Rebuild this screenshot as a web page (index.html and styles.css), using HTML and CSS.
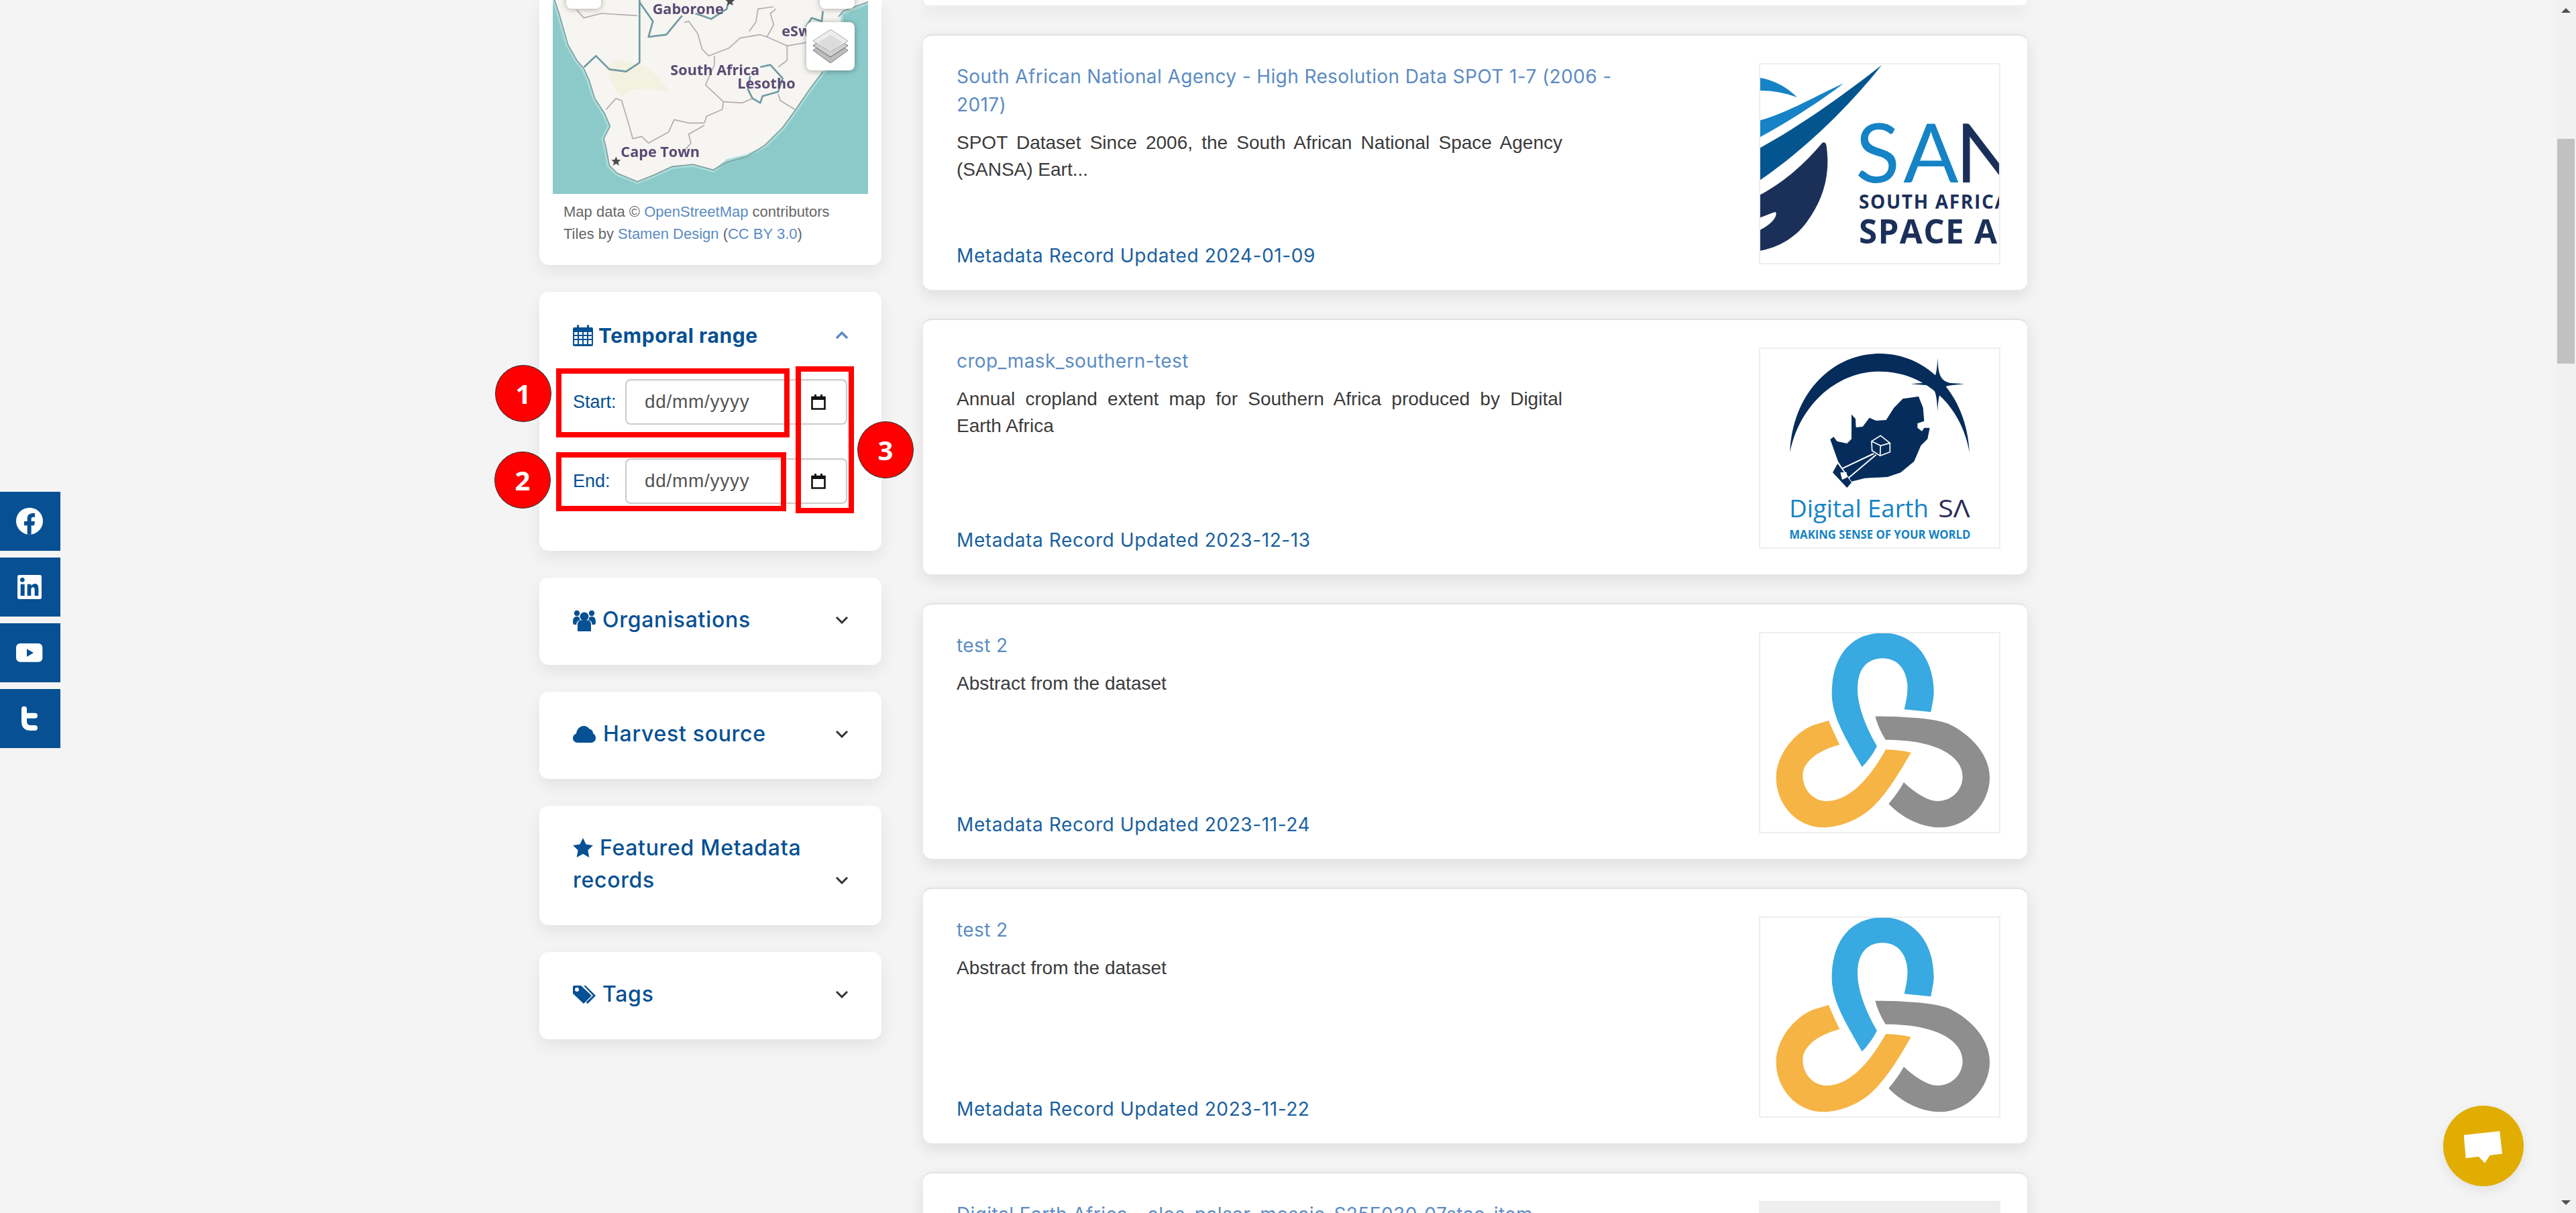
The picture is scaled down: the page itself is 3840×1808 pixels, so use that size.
FILE: index.html
```html
<!DOCTYPE html>
<html lang="en">
<head>
<meta charset="utf-8">
<title>Metadata search</title>
<link rel="stylesheet" href="styles.css">
</head>
<body>
<div class="app">
  <main class="content">
    <aside class="sidebar">
      <section class="panel map-panel">
        <div class="map">
          <svg class="map-art" viewBox="12 0 1410 867" preserveAspectRatio="none">
            <rect x="12" y="0" width="1410" height="867" fill="#8ccaca"/>
            <path class="coast-halo" d="M20,0 L40,60 L60,130 L80,200 L120,270 L150,305 L175,360 L200,440 L245,510 L268,565 L240,620 L250,660 L265,740 L300,775 L390,812 L470,780 L545,745 L640,735 L730,760 L790,712 L880,690 L960,650 L1040,570 L1095,495 L1160,400 L1220,320 L1300,240 L1300,60 L1422,8 L1422,0 Z"/>
            <path class="land" d="M20,0 L40,60 L60,130 L80,200 L120,270 L150,305 L175,360 L200,440 L245,510 L268,565 L240,620 L250,660 L265,740 L300,775 L390,812 L470,780 L545,745 L640,735 L730,760 L790,712 L880,690 L960,650 L1040,570 L1095,495 L1160,400 L1220,320 L1300,240 L1300,60 L1422,8 L1422,0 Z"/>
            <path class="desert" d="M262,290 L300,268 L420,295 L480,340 L535,410 L440,395 L370,400 L320,430 L290,400 L265,340 Z"/>
            <path class="coastline" d="M20,0 L40,60 L60,130 L80,200 L120,270 L150,305 L175,360 L200,440 L245,510 L268,565 L240,620 L250,660 L265,740 L300,775 L390,812 L470,780 L545,745 L640,735 L730,760 L790,725 L880,700 L960,650 L1040,570 L1095,495 L1160,400 L1220,320"/>
            <path class="coastline" d="M1290,75 L1310,50 L1422,8"/>
            <path class="state" d="M600,100 L620,95 L660,150 L680,220 L710,250 L760,230 L800,215 L850,170 L940,155 L970,165 L1060,205 L1060,270 L1020,300"/>
            <path class="state" d="M735,250 L735,290 L695,380 L775,455 L770,490 L700,520 L690,550 L620,550 L555,535 L530,590 L440,640 L410,610 L370,620 L350,550 L320,450 L295,440 L250,490"/>
            <path class="state" d="M775,455 L860,460 L905,440"/>
            <path class="state" d="M1020,420 L1030,450 L1095,490"/>
            <path class="state" d="M690,560 L620,600 L630,640 L595,680"/>
            <path class="state" d="M970,165 L1000,110 L985,60 L1010,40"/>
            <path class="state" d="M890,140 L920,100 L930,40 L1000,30"/>
            <path class="state" d="M1060,205 L1145,190"/>
            <path class="state" d="M120,45 L150,80 L230,60 L390,70"/>
            <path class="border" d="M400,0 L400,280 L340,320 L265,310 L205,250 L152,300"/>
            <path class="border" d="M400,10 L460,95 L440,165 L520,155 L590,70"/>
            <path class="border" d="M650,60 L720,85 L790,40 L800,0"/>
            <path class="border" d="M940,300 L985,290 L1040,350 L1020,410 L950,430 L940,460 L905,440 L885,400 L895,340"/>
            <path class="border" d="M1145,120 L1170,80 L1215,95 L1220,50"/>
            <path class="star" d="M295,700 L301,714 L316,715 L304,725 L309,740 L295,732 L281,740 L286,725 L274,715 L289,714 Z"/>
            <path class="star" d="M805,-15 L811,-1 L826,0 L814,10 L819,25 L805,17 L791,25 L796,10 L784,0 L799,-1 Z"/>
            <text class="place" x="458" y="62">Gaborone</text>
            <text class="place" x="1036" y="162">eSwatini</text>
            <text class="place" x="538" y="336">South Africa</text>
            <text class="place" x="838" y="396">Lesotho</text>
            <text class="place" x="316" y="702">Cape Town</text>
          </svg>
          <span class="map-btn map-btn-left"></span>
          <span class="map-btn map-btn-right"></span>
          <span class="map-layers">
            <svg class="layers-icon" viewBox="0 0 52 50">
              <path d="M26,14 L52,31 L26,50 L0,31 Z" fill="#bdbdbd" stroke="#777" stroke-width="1"/>
              <path d="M26,7 L52,24 L26,41 L0,24 Z" fill="#d0d0d0" stroke="#666" stroke-width="1"/>
              <path d="M26,0 L52,17 L26,33 L0,17 Z" fill="#ededed" stroke="#aaa" stroke-width="1"/>
              <path d="M26,8 L44,19 L26,33 L8,19 Z" fill="#dcdcdc"/>
            </svg>
          </span>
        </div>
        <p class="attribution">Map data © <a class="link" href="#">OpenStreetMap</a> contributors<br>Tiles by <a class="link" href="#">Stamen Design</a> (<a class="link" href="#">CC BY 3.0</a>)</p>
      </section>

      <section class="panel filter filter-open">
        <header class="filter-head">
          <h2 class="filter-title filter-title-bold">
            <svg class="ico ico-cal" viewBox="0 0 30 32"><path fill-rule="evenodd" d="M2,4 H6 V1.5 A1.5,1.5 0 0 1 9,1.5 V4 H21 V1.5 A1.5,1.5 0 0 1 24,1.5 V4 H28 A2,2 0 0 1 30,6 V30 A2,2 0 0 1 28,32 H2 A2,2 0 0 1 0,30 V6 A2,2 0 0 1 2,4 Z M2,11 V15 H7 V11 Z M9,11 V15 H14 V11 Z M16,11 V15 H21 V11 Z M23,11 V15 H28 V11 Z M2,17 V21 H7 V17 Z M9,17 V21 H14 V17 Z M16,17 V21 H21 V17 Z M23,17 V21 H28 V17 Z M2,23 V29 H7 V23 Z M9,23 V29 H14 V23 Z M16,23 V29 H21 V23 Z M23,23 V29 H28 V23 Z"/></svg>Temporal range
          </h2>
          <svg class="chev chev-up" viewBox="0 0 20 12"><path d="M2,10 L10,2 L18,10"/></svg>
        </header>
        <div class="date-rows">
          <div class="date-row">
            <span class="date-label">Start:</span>
            <div class="date-input"><span class="date-value">dd/mm/yyyy</span>
              <svg class="date-ico" viewBox="0 0 22 24"><path d="M1.5,5 H20.5 V22.5 H1.5 Z" fill="none" stroke="#111" stroke-width="2.6"/><path d="M1,4 H21 V9 H1 Z M5,1 H8 V5 H5 Z M14,1 H17 V5 H14 Z" fill="#111"/></svg>
            </div>
          </div>
          <div class="date-row">
            <span class="date-label">End:</span>
            <div class="date-input"><span class="date-value">dd/mm/yyyy</span>
              <svg class="date-ico" viewBox="0 0 22 24"><path d="M1.5,5 H20.5 V22.5 H1.5 Z" fill="none" stroke="#111" stroke-width="2.6"/><path d="M1,4 H21 V9 H1 Z M5,1 H8 V5 H5 Z M14,1 H17 V5 H14 Z" fill="#111"/></svg>
            </div>
          </div>
        </div>
      </section>

      <section class="panel filter">
        <header class="filter-head">
          <h2 class="filter-title">
            <svg class="ico ico-users" viewBox="0 0 34 32"><circle cx="17" cy="10" r="6.5"/><circle cx="6" cy="5" r="4.2"/><circle cx="28" cy="5" r="4.2"/><path d="M7,32 V22 C7,17 10,15.5 13,15.5 H21 C24,15.5 27,17 27,22 V32 Z"/><path d="M0,18 C0,11 3,10 6,10 C7.5,10 8.5,10.5 9.5,11 C10,14 11,16 12,15 C7,16 5,19 5.5,22 H2 C1,22 0,21 0,18 Z"/><path d="M34,18 C34,11 31,10 28,10 C26.5,10 25.5,10.5 24.5,11 C24,14 23,16 22,15 C27,16 29,19 28.5,22 H32 C33,22 34,21 34,18 Z"/></svg>Organisations
          </h2>
          <svg class="chev" viewBox="0 0 20 12"><path d="M2,2 L10,10 L18,2"/></svg>
        </header>
      </section>

      <section class="panel filter">
        <header class="filter-head">
          <h2 class="filter-title">
            <svg class="ico ico-cloud" viewBox="0 0 34 25"><path d="M7,25 C3,25 0,22 0,18.5 C0,15 2,12.5 5,11.5 C5.5,5 10.5,0 16,0 C20,0 23,2 25,5 C28,5 30,7.5 30,11 C32.5,12.5 34,15 34,18 C34,22 31,25 27,25 Z"/></svg>Harvest source
          </h2>
          <svg class="chev" viewBox="0 0 20 12"><path d="M2,2 L10,10 L18,2"/></svg>
        </header>
      </section>

      <section class="panel filter">
        <header class="filter-head">
          <h2 class="filter-title">
            <svg class="ico ico-star" viewBox="0 0 30 29"><path d="M15,0 L19.6,9.6 L30,11 L22.4,18.2 L24.3,29 L15,23.8 L5.7,29 L7.6,18.2 L0,11 L10.4,9.6 Z"/></svg>Featured Metadata records
          </h2>
          <svg class="chev" viewBox="0 0 20 12"><path d="M2,2 L10,10 L18,2"/></svg>
        </header>
      </section>

      <section class="panel filter">
        <header class="filter-head">
          <h2 class="filter-title">
            <svg class="ico ico-tags" viewBox="0 0 34 27"><path fill-rule="evenodd" d="M2,0 H12 L28,15 L16,27 L0,12 V2 A2,2 0 0 1 2,0 Z M6,3 A3,3 0 1 0 6,9 A3,3 0 1 0 6,3 Z"/><path d="M16,0 H19 L34,15 L22,27 L19.5,25 L30,15 Z"/></svg>Tags
          </h2>
          <svg class="chev" viewBox="0 0 20 12"><path d="M2,2 L10,10 L18,2"/></svg>
        </header>
      </section>
    </aside>

    <div class="results">
      <article class="result result-stub"></article>

      <article class="result">
        <div class="result-text">
          <a class="result-title" href="#">South African National Agency - High Resolution Data SPOT 1-7 (2006 - 2017)</a>
          <p class="result-desc">SPOT Dataset Since 2006, the South African National Space Agency (SANSA) Eart...</p>
          <p class="result-date">Metadata Record Updated 2024-01-09</p>
        </div>
        <div class="thumb">
          <svg class="thumb-art" viewBox="132 105 1068 888">
            <path fill="#1583c5" d="M132,165 C190,175 250,205 297,252 C240,232 190,222 132,222 Z"/>
            <path fill="#1583c5" d="M132,355 C260,320 390,240 505,190 C400,270 260,360 132,430 Z"/>
            <path fill="#03558f" d="M132,478 C320,375 520,230 675,108 C540,280 340,480 132,622 Z"/>
            <path fill="#1b3059" fill-rule="evenodd" d="M132,688 C240,630 330,550 410,455 Q425,450 428,470 C445,590 420,700 340,810 C290,880 210,925 132,938 Z M132,790 C160,780 185,768 200,765 Q208,775 195,795 C180,815 160,830 132,845 Z"/>
            <text class="sansa-big" y="632"><tspan class="sansa-blue" x="558">S</tspan><tspan class="sansa-blue" x="772">A</tspan><tspan class="sansa-dark" x="1005">N</tspan></text>
            <text class="sansa-small" x="573" y="750">SOUTH AFRICAN</text>
            <text class="sansa-mid" x="573" y="905">SPACE AGENCY</text>
          </svg>
        </div>
      </article>

      <article class="result">
        <div class="result-text">
          <a class="result-title" href="#">crop_mask_southern-test</a>
          <p class="result-desc">Annual cropland extent map for Southern Africa produced by Digital Earth Africa</p>
          <p class="result-date">Metadata Record Updated 2023-12-13</p>
        </div>
        <div class="thumb">
          <svg class="thumb-art" viewBox="132 57 1068 888">
            <path fill="#052c5a" d="M265,520 C275,260 450,78 665,78 C880,78 1055,260 1068,520 C1030,300 860,158 665,158 C480,158 310,300 265,520 Z"/>
            <path fill="#052c5a" d="M925,95 C928,170 935,200 985,210 L1045,214 L985,220 C940,225 930,250 925,335 C920,250 915,235 880,220 L805,214 L880,208 C915,200 922,170 925,95 Z"/>
            <path fill="#052c5a" d="M445,462 L460,450 L475,470 L520,480 L540,460 L540,350 L558,370 L560,408 L590,405 L620,365 L650,378 L695,375 L730,320 L770,280 L840,270 L860,320 L865,380 L835,390 L835,410 L855,425 L865,410 L890,410 L880,460 L850,490 L820,560 L760,610 L700,630 L600,635 L540,650 L480,560 Z"/>
            <path fill="#052c5a" stroke="#fff" stroke-width="5" d="M670,445 L712,478 L712,518 L668,535 L632,512 L630,470 Z M630,470 L670,490 L712,478 M670,490 L668,535"/>
            <path fill="none" stroke="#fff" stroke-width="6" d="M498,592 L640,525 M520,640 L650,530"/>
            <path fill="#052c5a" d="M478,570 L540,655 L520,678 L456,610 Z"/>
            <path fill="#fff" d="M490,610 L518,608 L520,632 L498,642 Z"/>
            <text class="des-main" x="262" y="810" textLength="623" lengthAdjust="spacingAndGlyphs">Digital Earth</text>
            <text class="des-sa" x="928" y="810" textLength="142" lengthAdjust="spacingAndGlyphs">SΛ</text>
            <text class="des-tag" x="262" y="905" textLength="810" lengthAdjust="spacingAndGlyphs">MAKING SENSE OF YOUR WORLD</text>
          </svg>
        </div>
      </article>

      <article class="result">
        <div class="result-text">
          <a class="result-title" href="#">test 2</a>
          <p class="result-desc">Abstract from the dataset</p>
          <p class="result-date">Metadata Record Updated 2023-11-24</p>
        </div>
        <div class="thumb">
          <svg class="thumb-art" viewBox="132 70 1068 888">
            <path fill="#38a9e1" d="M587,668 C530,565 452,450 452,340 C452,180 530,70 680,68 C810,68 908,170 908,335 C908,360 900,395 895,422 L776,410 C785,370 792,340 790,300 C785,230 745,182 680,182 C600,182 567,240 567,320 C567,400 610,500 654,575 C635,610 615,640 587,668 Z"/>
            <path fill="#f5b444" d="M438,460 C455,500 470,535 487,568 C400,590 322,640 322,705 C322,770 370,820 430,820 C530,820 620,720 693,590 C730,590 770,595 806,603 C750,700 690,800 620,860 C560,910 480,938 415,938 C290,938 203,830 203,715 C203,610 290,510 370,480 Z"/>
            <path fill="#8e8e8e" d="M646,441 C730,441 900,445 975,475 C1070,520 1158,610 1158,715 C1158,830 1060,938 935,938 C860,938 770,900 706,832 C730,805 755,770 774,736 C820,780 880,820 925,820 C990,820 1037,770 1037,710 C1037,620 920,545 692,546 C670,510 655,475 646,441 Z"/>
          </svg>
        </div>
      </article>

      <article class="result">
        <div class="result-text">
          <a class="result-title" href="#">test 2</a>
          <p class="result-desc">Abstract from the dataset</p>
          <p class="result-date">Metadata Record Updated 2023-11-22</p>
        </div>
        <div class="thumb">
          <svg class="thumb-art" viewBox="132 70 1068 888">
            <path fill="#38a9e1" d="M587,668 C530,565 452,450 452,340 C452,180 530,70 680,68 C810,68 908,170 908,335 C908,360 900,395 895,422 L776,410 C785,370 792,340 790,300 C785,230 745,182 680,182 C600,182 567,240 567,320 C567,400 610,500 654,575 C635,610 615,640 587,668 Z"/>
            <path fill="#f5b444" d="M438,460 C455,500 470,535 487,568 C400,590 322,640 322,705 C322,770 370,820 430,820 C530,820 620,720 693,590 C730,590 770,595 806,603 C750,700 690,800 620,860 C560,910 480,938 415,938 C290,938 203,830 203,715 C203,610 290,510 370,480 Z"/>
            <path fill="#8e8e8e" d="M646,441 C730,441 900,445 975,475 C1070,520 1158,610 1158,715 C1158,830 1060,938 935,938 C860,938 770,900 706,832 C730,805 755,770 774,736 C820,780 880,820 925,820 C990,820 1037,770 1037,710 C1037,620 920,545 692,546 C670,510 655,475 646,441 Z"/>
          </svg>
        </div>
      </article>

      <article class="result">
        <div class="result-text">
          <a class="result-title" href="#">Digital Earth Africa - alos_palsar_mosaic_S25E030_07stac-item</a>
        </div>
        <div class="thumb thumb-empty"></div>
      </article>
    </div>
  </main>

  <div class="scrollbar">
    <span class="scroll-arrow scroll-up"></span>
    <span class="scroll-thumb"></span>
    <span class="scroll-arrow scroll-down"></span>
  </div>

  <nav class="social">
    <a class="social-link" href="#"><svg viewBox="0 0 270 264"><circle cx="132" cy="131" r="60" fill="#fff"/><path fill="#065093" d="M122,191 V151 H108 V132 H122 V118 C122,105 132,96 146,96 H156 V113 H148 C142,113 140,116 140,121 V132 H156 L153,151 H140 V191 Z"/></svg></a>
    <a class="social-link" href="#"><svg viewBox="0 0 270 264"><rect x="78" y="78" width="108" height="108" rx="8" fill="#fff"/><circle cx="100" cy="100" r="10" fill="#065093"/><path fill="#065093" d="M92,119 H110 V171 H92 Z M122,119 H139 V127 C144,120 152,117 158,117 C168,117 172,128 172,140 V171 H155 V145 C155,137 152,133 147,133 C142,133 139,137 139,145 V171 H122 Z"/></svg></a>
    <a class="social-link" href="#"><svg viewBox="0 0 270 264"><rect x="72" y="90" width="118" height="83" rx="18" fill="#fff"/><path fill="#065093" d="M120,115 L150,132 L120,150 Z"/></svg></a>
    <a class="social-link" href="#"><svg viewBox="0 0 270 264"><path d="M108,89 V144 Q108,174 138,174 H156 M108,119 H156" fill="none" stroke="#fff" stroke-width="24" stroke-linecap="round"/></svg></a>
  </nav>

  <button class="chat" type="button">
    <svg class="chat-ico" viewBox="0 0 120 120"><path fill="#fff" d="M30.7,43.7 L84.3,38 L88,71.7 L69.7,74 L62,85.7 L53,76 L33.7,78.3 Z"/></svg>
  </button>

  <span class="mark mark-start"></span>
  <span class="mark mark-end"></span>
  <span class="mark mark-icons"></span>
  <span class="badge badge-1">1</span>
  <span class="badge badge-2">2</span>
  <span class="badge badge-3">3</span>
</div>
</body>
</html>
```

FILE: styles.css
```css
* { box-sizing: border-box; }
html, body { margin: 0; padding: 0; }
body {
  width: 3840px;
  height: 1808px;
  overflow: hidden;
  background: #f4f4f4;
  color: #333;
  font-family: "Liberation Sans", Arial, sans-serif;
  font-size: 28px;
  line-height: 40px;
}
.app { position: relative; display: flex; width: 3840px; height: 1808px; overflow: hidden; }
.content { flex: 1; display: flex; align-items: flex-start; gap: 61px; padding-left: 804px; min-width: 0; }
.sidebar { width: 510px; display: flex; flex-direction: column; gap: 40px; flex: none; }
.panel {
  background: #fff;
  border-radius: 0 0 14px 14px;
  box-shadow: 0 10px 24px rgba(0, 0, 0, .07);
}
.map-panel { height: 395px; padding: 0 20px; }
.map { position: relative; height: 289px; overflow: hidden; }
.map-art { display: block; width: 470px; height: 289px; filter: blur(.6px); }
.land { fill: #f6f5f1; }
.coast-halo { fill: none; stroke: #aadcd8; stroke-width: 22; }
.desert { fill: #f3f1e0; }
.coastline { fill: none; stroke: #7f9c9f; stroke-width: 5; }
.state { fill: none; stroke: #b5acb1; stroke-width: 5; stroke-linejoin: round; }
.border { fill: none; stroke: #6f9aa3; stroke-width: 8; stroke-linejoin: round; }
.star { fill: #4a4a4a; }
.place { font-family: "Open Sans", sans-serif; font-weight: 700; font-size: 65px; fill: #5a4a75; }
.map-btn {
  position: absolute;
  top: -40px;
  width: 52px;
  height: 53px;
  background: #fff;
  border-radius: 8px;
  box-shadow: 0 1px 8px rgba(0, 0, 0, .3);
}
.map-btn-left { left: 20px; }
.map-btn-right { right: 20px; }
.map-layers {
  position: absolute;
  top: 33px;
  right: 20px;
  width: 72px;
  height: 72px;
  display: flex;
  align-items: center;
  justify-content: center;
  background: #fff;
  border-radius: 8px;
  box-shadow: 0 1px 8px rgba(0, 0, 0, .35);
}
.layers-icon { width: 52px; height: 50px; }
.attribution { margin: 10px 0 0 16px; font-size: 22px; line-height: 33px; color: #666; }
.link { color: #5b8bc2; text-decoration: none; }

.filter { border-radius: 14px; padding: 39px 51px 43px 50px; }
.filter-open { padding-top: 41px; padding-bottom: 70px; }
.filter-head { display: flex; align-items: flex-end; justify-content: space-between; }
.filter-title {
  margin: 0;
  flex: 1;
  font-family: Inter, "Open Sans", sans-serif;
  font-weight: 500;
  font-size: 32px;
  letter-spacing: .7px;
  line-height: 48px;
  color: #065093;
}
.filter-title-bold { font-weight: 700; font-size: 30px; letter-spacing: .6px; }
.ico { fill: #065093; vertical-align: -4px; margin-right: 10px; }
.ico-cal { width: 30px; height: 32px; margin-right: 8px; vertical-align: -5px; }
.ico-users { width: 34px; height: 32px; vertical-align: -6px; }
.ico-cloud { width: 34px; height: 25px; vertical-align: -2px; margin-right: 11px; }
.ico-star { width: 30px; height: 29px; vertical-align: -3px; margin-right: 10px; }
.ico-tags { width: 34px; height: 27px; vertical-align: -3px; }
.chev { width: 20px; height: 12px; margin-right: -2px; margin-bottom: 18px; flex: none; fill: none; stroke: #333; stroke-width: 3; }
.chev-up { stroke: #5b8bc2; stroke-width: 3.4; }
.date-rows { display: flex; flex-direction: column; gap: 50px; margin-top: 41px; }
.date-row { display: flex; align-items: center; }
.date-label { width: 78px; font-size: 27px; color: #065093; }
.date-input {
  flex: 1;
  height: 68px;
  display: flex;
  align-items: center;
  justify-content: space-between;
  padding: 0 30px 0 27px;
  background: #fff;
  border: 2px solid #ccc;
  border-radius: 8px;
  box-shadow: inset 0 1px 2px rgba(0, 0, 0, .08);
}
.date-value { font-size: 28px; letter-spacing: .7px; color: #555; }
.date-ico { width: 22px; height: 24px; }

.results { width: 1648px; display: flex; flex-direction: column; gap: 42px; flex: none; }
.result {
  flex: none;
  height: 382px;
  display: flex;
  justify-content: space-between;
  padding: 40px 40px 31px 50px;
  background: #fff;
  border: 1px solid #e9e9e9;
  border-top: 2px solid #e2e2e2;
  border-radius: 14px;
  box-shadow: 0 8px 22px rgba(0, 0, 0, .09);
}
.result-stub { height: 9px; padding: 0; border-top: 0; border-radius: 0 0 14px 14px; }
.result-text { width: 1040px; display: flex; flex-direction: column; align-items: flex-start; }
.result-title {
  max-width: 1010px;
  font-family: Inter, "Open Sans", sans-serif;
  font-size: 28px;
  letter-spacing: .4px;
  line-height: 42px;
  color: #5b8bc2;
  text-decoration: none;
}
.result-desc { width: 903px; margin: 16px 0 0; text-align: justify; color: #3a3a3a; }
.result-date {
  margin: auto 0 0;
  font-family: Inter, "Open Sans", sans-serif;
  font-size: 28px;
  letter-spacing: .6px;
  line-height: 40px;
  color: #1a5f9e;
}
.thumb { width: 360px; height: 300px; margin-top: 1px; border: 2px solid #eee; background: #fff; flex: none; }
.thumb-art { display: block; width: 356px; height: 296px; }
.thumb-empty { background: #eee; }
.sansa-big { font-family: Lato, sans-serif; font-size: 365px; }
.sansa-blue { fill: #1583c5; }
.sansa-dark { fill: #1b3059; }
.sansa-small { font-family: "Open Sans", sans-serif; font-weight: 700; font-size: 84px; letter-spacing: 5px; fill: #1b3059; }
.sansa-mid { font-family: "Open Sans", sans-serif; font-weight: 700; font-size: 148px; letter-spacing: 4px; fill: #1b3059; }
.des-main { font-family: "Open Sans", sans-serif; font-size: 112px; fill: #1583c5; }
.des-sa { font-family: "Open Sans", sans-serif; font-size: 112px; fill: #2b2d55; }
.des-tag { font-family: "Open Sans", sans-serif; font-weight: 700; font-size: 52px; fill: #1583c5; }

.scrollbar {
  width: 30px;
  flex: none;
  display: flex;
  flex-direction: column;
  align-items: center;
  padding-top: 12px;
  background: #f1f1f1;
}
.scroll-arrow { width: 0; height: 0; border-left: 7px solid transparent; border-right: 7px solid transparent; flex: none; }
.scroll-up { border-bottom: 7px solid #505050; }
.scroll-thumb { width: 26px; height: 335px; margin-top: 188px; background: #c1c1c1; flex: none; }
.scroll-down { margin-top: 1247px; border-top: 7px solid #505050; }

.social { position: absolute; top: 733px; left: 0; display: flex; flex-direction: column; gap: 10px; }
.social-link { display: block; width: 90px; height: 88px; background: #065093; }
.social-link svg { display: block; width: 90px; height: 88px; }

.chat {
  position: absolute;
  left: 3642px;
  top: 1648px;
  width: 120px;
  height: 120px;
  padding: 0;
  border: 0;
  border-radius: 50%;
  background: #e0ad00;
  box-shadow: 0 6px 18px rgba(0, 0, 0, .08);
}
.chat-ico { display: block; width: 120px; height: 120px; }

.mark { position: absolute; border: 8px solid #f00; }
.mark-start { left: 829px; top: 549px; width: 348px; height: 103px; }
.mark-end { left: 829px; top: 674px; width: 343px; height: 88px; }
.mark-icons { left: 1186px; top: 546px; width: 87px; height: 219px; }
.badge {
  position: absolute;
  width: 84px;
  height: 85px;
  display: flex;
  align-items: center;
  justify-content: center;
  background: #f00;
  border: 1px solid #333;
  border-radius: 50%;
  color: #fff;
  font-family: "Open Sans", sans-serif;
  font-weight: 700;
  font-size: 40px;
  line-height: 1;
}
.badge-1 { left: 738px; top: 544px; }
.badge-2 { left: 737px; top: 673px; }
.badge-3 { left: 1278px; top: 628px; }
```
